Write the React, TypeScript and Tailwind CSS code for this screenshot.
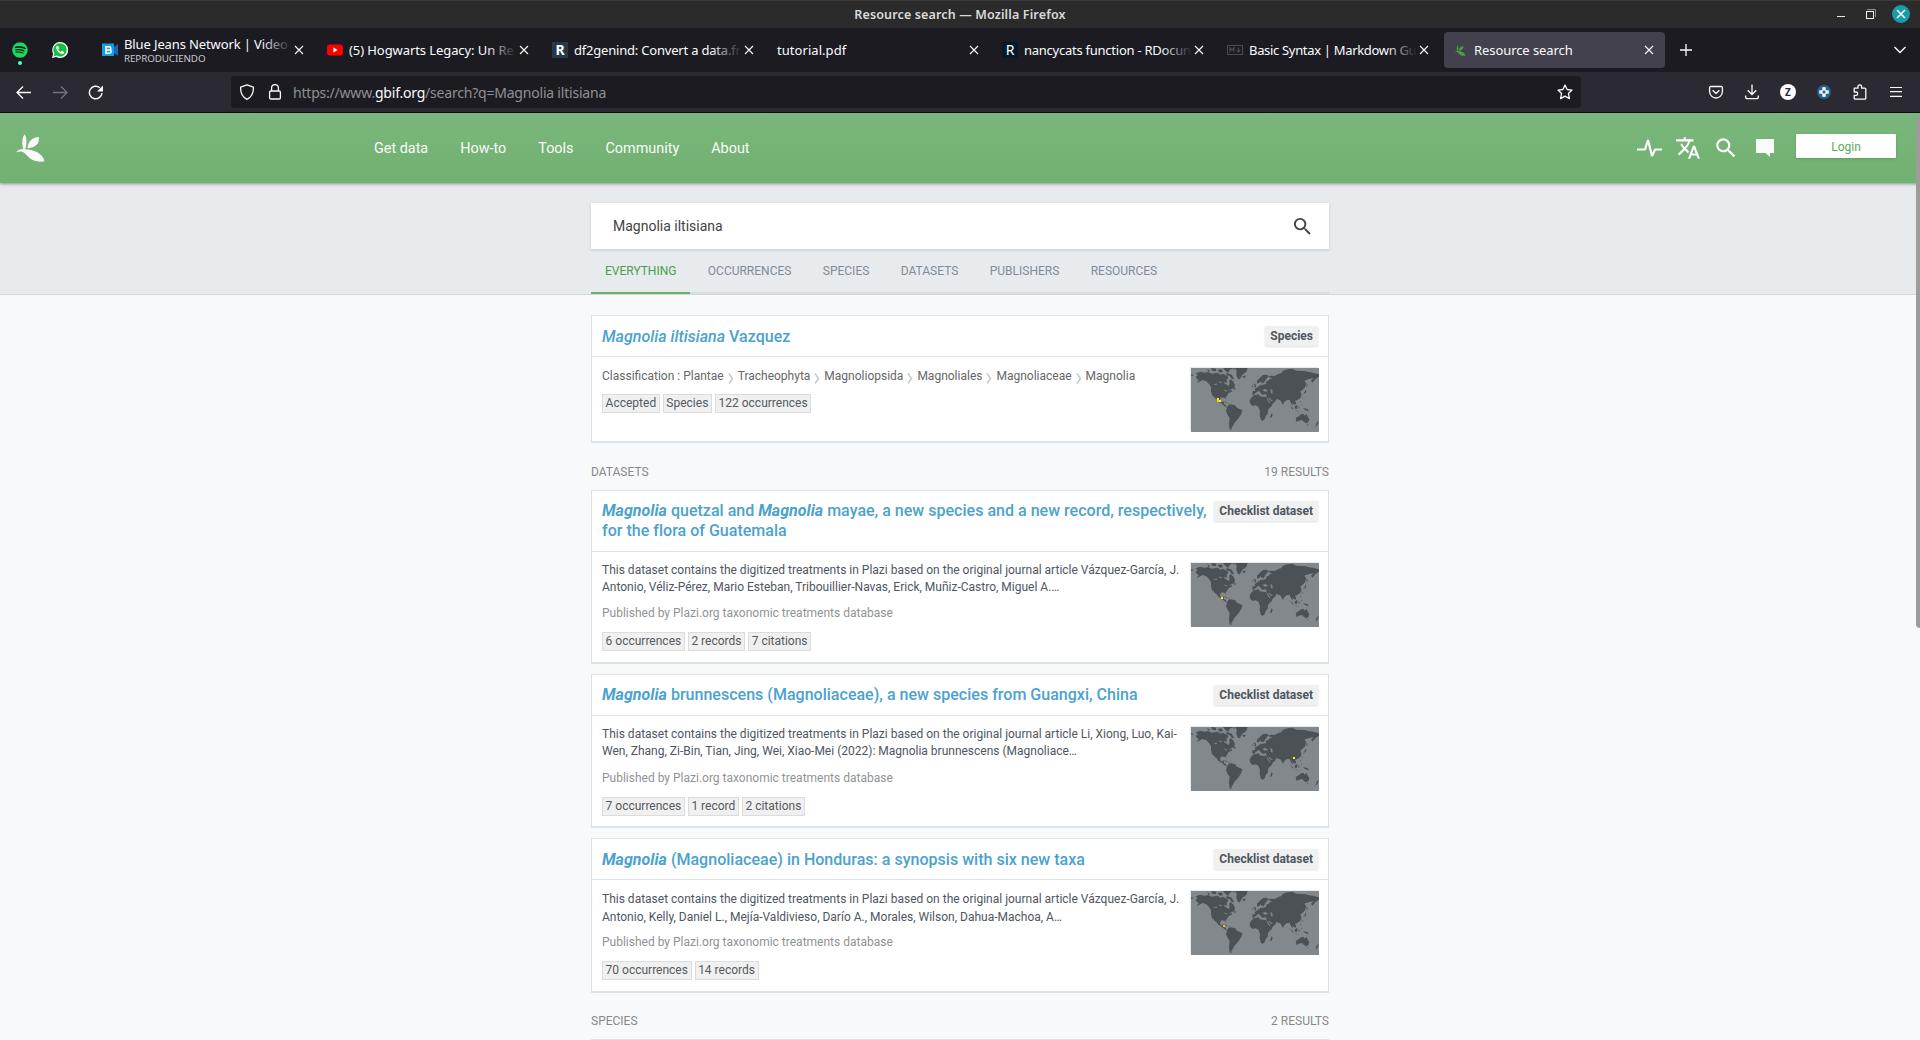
import React from "react";
import { MdTranslate, MdSearch } from "react-icons/md";
import { FaSpotify, FaPhoneAlt } from "react-icons/fa";

const UI = "font-['Noto_Sans',sans-serif]";

function Bird({ className }: { className: string }) {
  return (
    <svg viewBox="0 0 86 84" className={className} fill="currentColor">
      <path d="M25 1C31 9 33 24 28 44L21 44C16 27 18 12 25 1Z" />
      <path d="M68 9C70 28 62 39 34 43C36 22 47 10 68 9Z" />
      <path d="M0 55C6 46 16 43 27 46C48 47 80 56 85 82C58 86 42 76 31 63C22 51 10 50 0 55Z" />
    </svg>
  );
}

function Cross() {
  return (
    <svg viewBox="0 0 10 10" className="size-[10px] shrink-0" fill="none" stroke="#fbfbfe" strokeWidth="1.1">
      <path d="M1 1L9 9M9 1L1 9" />
    </svg>
  );
}

type TabProps = { icon?: React.ReactNode; title: string; sub?: string; tracking: string; active?: boolean };

function Tab({ icon, title, sub, tracking, active }: TabProps) {
  return (
    <div className="flex h-full w-[225px] shrink-0 items-center px-[2px] py-1">
      <div className={"flex h-full w-[221px] items-center rounded pl-2 pr-[11px] " + (active ? "bg-[#42414d]" : "")}>
        {icon && <div className="mr-[6px] flex size-4 shrink-0 items-center justify-center">{icon}</div>}
        <div className="relative min-w-0 flex-1 whitespace-nowrap text-[#fbfbfe]">
          <div className={"text-[13px] leading-[17px] " + tracking}>{title}</div>
          {sub && <div className="text-[9.8px] leading-[12px] tracking-[-0.1px] text-[#c9c9ce]">{sub}</div>}
          {!active && icon && <div className="absolute inset-y-0 -right-[6px] w-9 bg-gradient-to-r from-transparent to-[#1c1b22] to-85%" />}
        </div>
        <div className="relative ml-[3px] flex shrink-0">
          <Cross />
        </div>
      </div>
    </div>
  );
}

function RIcon({ className }: { className: string }) {
  return <span className={"flex size-4 items-center justify-center text-[14px] leading-none text-white " + className}>R</span>;
}

function Chrome() {
  return (
    <div className={UI}>
      <div className="flex h-7 items-center border-t border-[#3b3b3b] bg-[#2b2b2b]">
        <div className="w-[200px]" />
        <div className="flex-1 pt-px text-center text-[12.5px] font-semibold leading-none tracking-[0.14px] text-[#dadada]">
          Resource search — Mozilla Firefox
        </div>
        <div className="-mt-px flex w-[200px] items-center justify-end pr-[10px]">
          <svg viewBox="0 0 74 18" className="h-[18px] w-[74px]" fill="none">
            <path d="M1 11.5H9" stroke="#e6e6e6" />
            <path d="M31 4.5H39.5V12" stroke="#8f8f8f" />
            <rect x="30.5" y="6.5" width="7" height="7" stroke="#f0f0f0" />
            <circle cx="65" cy="9" r="9" fill="#1a9ba8" />
            <path d="M61 5L69 13M69 5L61 13" stroke="#fff" strokeWidth="1.5" />
          </svg>
        </div>
      </div>

      <div className="flex h-11 items-center bg-[#1c1b22]">
        <div className="flex w-[92px] shrink-0 items-center pl-3">
          <div className="relative size-4 rounded-full bg-[#10131a]">
            <FaSpotify className="size-4 text-[#1ed760]" />
            <span className="absolute left-[6px] top-[19px] size-1 rounded-full bg-[#54ffbd]" />
          </div>
          <div className="relative ml-6 flex size-4 items-center justify-center">
            <svg viewBox="0 0 16 16" className="absolute inset-0 size-4">
              <path d="M0 16L1.2 11.8A8 8 0 1 1 4.2 14.9Z" fill="#fff" />
              <path d="M1.6 14.4L2.4 11.5A6.7 6.7 0 1 1 4.6 13.6Z" fill="#12c143" />
            </svg>
            <FaPhoneAlt className="relative size-[8px] text-white" />
          </div>
        </div>
        <Tab
          title="Blue Jeans Network | Video"
          sub="REPRODUCIENDO"
          tracking="tracking-[-0.12px]"
          icon={
            <svg viewBox="0 0 16 16" className="size-4">
              <rect y="1.5" width="12" height="12.5" fill="#1a9be0" />
              <path d="M12 5L16 2V14L12 11Z" fill="#1667c0" />
              <path d="M4 4.8H7.2A1.6 1.6 0 0 1 7.2 8H4ZM4 8H7.6A1.6 1.6 0 0 1 7.6 11.2H4Z" fill="none" stroke="#fff" strokeWidth="1.5" />
            </svg>
          }
        />
        <Tab
          title="(5) Hogwarts Legacy: Un Re"
          tracking="tracking-[-0.08px]"
          icon={
            <svg viewBox="0 0 16 16" className="size-4">
              <rect y="2.5" width="16" height="11" rx="3" fill="#f00" />
              <path d="M6.4 5.6L10.6 8L6.4 10.4Z" fill="#fff" />
            </svg>
          }
        />
        <Tab title="df2genind: Convert a data.fr" tracking="tracking-[-0.2px]" icon={<RIcon className="bg-[#273849] font-bold" />} />
        <Tab title="tutorial.pdf" tracking="tracking-[0.05px]" />
        <Tab title="nancycats function - RDocun" tracking="tracking-[-0.25px]" icon={<RIcon className="rounded-[1px] bg-[#05192d]" />} />
        <Tab
          title="Basic Syntax | Markdown Gu"
          tracking="tracking-[-0.32px]"
          icon={
            <svg viewBox="0 0 16 16" className="size-4" fill="none" stroke="#4a4a50">
              <rect x="0.5" y="3.5" width="15" height="9" />
              <path d="M3 10.5V5.8L5 8.2L7 5.8V10.5M11.5 5.5V10M9.7 8.2L11.5 10.2L13.3 8.2" strokeWidth="1.2" />
            </svg>
          }
        />
        <Tab title="Resource search" active tracking="tracking-[-0.08px]" icon={<Bird className="h-[11px] w-3 text-[#4c9e45]" />} />
        <svg viewBox="0 0 12 12" className="ml-[13px] size-3" stroke="#fbfbfe" strokeWidth="1.3">
          <path d="M6 0V12M0 6H12" />
        </svg>
        <svg viewBox="0 0 12 8" className="ml-auto mr-[14px] h-2 w-3" fill="none" stroke="#fbfbfe" strokeWidth="1.4">
          <path d="M0.5 1L6 6.5L11.5 1" />
        </svg>
      </div>

      <div className="flex h-[41px] items-center border-b border-[#0c0c0d] bg-[#2b2a33]">
        <div className="flex w-[231px] shrink-0 items-center gap-5 pl-4">
          <svg viewBox="0 0 16 16" className="size-4" fill="none" stroke="#fbfbfe" strokeWidth="1.3">
            <path d="M1 8.5H15M7 2.5L1 8.5L7 14.5" />
          </svg>
          <svg viewBox="0 0 16 16" className="size-4" fill="none" stroke="#74737b" strokeWidth="1.3">
            <path d="M1 8.5H15M9 2.5L15 8.5L9 14.5" />
          </svg>
          <svg viewBox="0 0 16 16" className="size-4" fill="none" stroke="#fbfbfe" strokeWidth="1.4">
            <path d="M14 9A6.3 6.3 0 1 1 11.8 3.7" />
            <path d="M15 1.5V7.5H9Z" fill="#fbfbfe" stroke="none" />
          </svg>
        </div>
        <div className="flex h-8 w-[1350px] shrink-0 items-center rounded bg-[#1c1b22] pl-2">
          <svg viewBox="0 0 16 16" className="size-4" fill="none" stroke="#fbfbfe" strokeWidth="1.3" strokeLinejoin="round">
            <path d="M8 0.8L14.4 3.2C14.6 8.5 12.6 13 8 15.3C3.4 13 1.4 8.5 1.6 3.2Z" />
          </svg>
          <svg viewBox="0 0 16 16" className="ml-3 size-4" fill="none" stroke="#fbfbfe" strokeWidth="1.3">
            <rect x="2.6" y="7" width="10.8" height="8" rx="1.2" />
            <path d="M4.6 7V4A3.4 3.4 0 0 1 11.4 4V7" />
          </svg>
          <div className="ml-[10px] whitespace-nowrap pt-px text-[14px] leading-none tracking-[-0.21px] text-[#8f8f94]">
            https://www.<span className="text-[#fbfbfe]">gbif.org</span>/search?q=Magnolia iltisiana
          </div>
          <svg viewBox="0 0 16 16" className="ml-auto mr-2 size-4" fill="none" stroke="#fbfbfe" strokeWidth="1.3" strokeLinejoin="round">
            <path d="M8 1L10.1 5.5L15 6.1L11.4 9.4L12.4 14.6L8 12.1L3.6 14.6L4.6 9.4L1 6.1L5.9 5.5Z" />
          </svg>
        </div>
        <div className="ml-auto flex items-center gap-5 pr-4">
          <svg viewBox="0 0 16 16" className="size-4" fill="none" stroke="#fbfbfe" strokeWidth="1.3" strokeLinejoin="round">
            <path d="M2.3 2.5H13.7A1 1 0 0 1 14.4 3.3V7.6A6.4 6.4 0 0 1 1.6 7.6V3.3A1 1 0 0 1 2.3 2.5ZM4.6 6.3L8 9.5L11.4 6.3" />
          </svg>
          <svg viewBox="0 0 16 16" className="size-4" fill="none" stroke="#fbfbfe" strokeWidth="1.3">
            <path d="M8 0.5V10.5M3.7 6.2L8 10.5L12.3 6.2M1.7 11.5V13.5A1.4 1.4 0 0 0 3.1 14.6H12.9A1.4 1.4 0 0 0 14.3 13.5V11.5" />
          </svg>
          <div className="flex size-4 items-center justify-center rounded-full bg-[#fbfbfe] text-[10px] font-bold leading-none text-[#2b2a33]">Z</div>
          <svg viewBox="0 0 16 16" className="size-4">
            <circle cx="8" cy="8" r="7" fill="#27618f" />
            <path d="M6.2 3.2H9.8V6.2H12.8V9.8H9.8V12.8H6.2V9.8H3.2V6.2H6.2Z" fill="#e8f3fa" />
            <rect x="6.7" y="6.7" width="2.6" height="2.6" fill="#27618f" />
          </svg>
          <svg viewBox="0 0 16 16" className="size-4" fill="none" stroke="#fbfbfe" strokeWidth="1.3" strokeLinejoin="round">
            <path d="M2.2 4.2H6V2.6A1.8 1.8 0 0 1 9.6 2.6V4.2H12.8A1 1 0 0 1 13.8 5.2V14.2A1 1 0 0 1 12.8 15.2H3.2A1 1 0 0 1 2.2 14.2V11.4H4A1.7 1.7 0 0 0 4 8H2.2Z" />
          </svg>
          <svg viewBox="0 0 16 16" className="size-4" fill="none" stroke="#fbfbfe" strokeWidth="1.2">
            <path d="M2 3.5H14M2 7.6H14M2 12.4H14" />
          </svg>
        </div>
      </div>
    </div>
  );
}

const LAND =
  "M14 16L28 11L40 14L52 12L62 17L80 14L88 20L96 17L104 22L112 26L108 36L98 40L100 46L108 50L113 55L116 46L114 38L120 34L128 42L132 52L130 60L120 64L112 68L124 66L122 71L112 76L108 84L104 88L106 95L102 90L92 88L88 92L87 99L92 104L97 99L99 104L98 108L104 110L106 116L112 117L108 119L100 114L92 107L82 101L76 92L72 90L76 98L70 88L63 81L60 70L60 58L54 48L46 40L34 36L24 42L16 44L24 37L18 34L14 26L20 22Z" +
  "M132 0L170 0L166 12L154 20L146 34L140 32L136 20L137 8Z" +
  "M60 0L76 2L74 10L64 8ZM80 6L92 4L96 12L86 14ZM96 0L126 0L116 6L112 14L104 10ZM106 14L122 20L130 34L122 32L116 24L106 22ZM124 2L130 0L130 6ZM48 4L58 8L52 11ZM96 36L106 34L108 44L98 42Z" +
  "M126 62L134 60L133 66ZM154 24L164 23L162 29L156 29Z" +
  "M98 100L106 102L110 106L102 103ZM112 106L118 107L114 109Z" +
  "M108 120L112 111L120 109L132 112L138 119L154 127L151 138L143 150L136 158L130 165L126 173L121 180L122 186L116 184L114 168L116 150L108 137L105 128Z" +
  "M176 98L180 90L188 82L204 79L206 85L216 86L226 87L229 96L236 106L246 105L242 114L232 124L230 137L224 144L222 152L214 159L209 154L206 140L207 128L202 116L194 112L184 114L177 106ZM242 136L245 140L241 150L237 148Z" +
  "M184 80L184 70L193 69L191 63L202 56L208 50L216 50L226 48L224 42L232 38L236 34L244 32L232 27L238 23L250 24L262 18L270 16L276 8L290 4L304 2L316 8L340 9L352 12L366 14L384 19L384 26L374 32L364 44L360 38L368 30L352 34L340 38L346 46L342 58L334 66L328 70L332 80L328 90L318 97L312 98L316 106L312 111L304 104L306 114L300 106L296 96L288 96L280 102L276 111L268 97L256 93L252 102L240 108L234 98L226 86L226 79L214 80L209 75L204 68L198 72L188 80Z" +
  "M198 46L198 38L206 30L216 21L226 20L234 24L228 30L222 38L218 46L212 46L208 40L204 46ZM188 50L192 46L196 56L188 60L192 54ZM182 54L187 52L186 57Z" +
  "M346 50L350 48L348 60ZM342 70L344 64L346 72L336 80ZM333 90L335 88L335 94Z" +
  "M296 112L308 124L304 124ZM310 116L320 110L318 122L312 122ZM322 116L326 118L323 124ZM328 96L331 104L328 102ZM330 110L334 112L332 113ZM336 120L350 124L354 130L342 126ZM308 127L326 130L318 130Z" +
  "M314 150L324 144L330 139L338 138L342 144L346 137L352 149L355 154L352 163L345 166L338 161L334 156L324 158L316 161ZM348 169L352 169L350 173ZM378 162L383 160L380 170L372 177L376 168Z" +
  "M0 18L8 22L2 25ZM150 0L140 6";

function MapImage({ spots }: { spots: [number, number, string][] }) {
  return (
    <div className="h-16 w-32 shrink-0 bg-[#83888c] shadow-[-1px_-1px_0_#e7e9ea]">
      <svg viewBox="0 0 384 192" className="block h-16 w-32">
        <path d={LAND} fill="#4b5155" />
        <path d="M214 66L222 63L232 68L222 71ZM238 62L244 66L245 77L240 75ZM208 56L216 46L214 42L211 50ZM232 88L242 96L246 96L242 99L236 96Z" fill="#83888c" />
        <path d="M70 50L78 48M84 42L92 44M100 66L108 70" stroke="#83888c" strokeWidth="3" />
        {spots.map(([x, y, c], i) => (
          <rect key={i} x={x} y={y} width="6" height="6" fill={c} />
        ))}
      </svg>
    </div>
  );
}

function Chips({ items }: { items: string[] }) {
  return (
    <div className="flex gap-[3px]">
      {items.map((t) => (
        <span key={t} className="h-[19px] whitespace-nowrap border border-[#dcdcdc] bg-[#f0f0f0] px-[2.6px] text-[12px] leading-[17px] text-[#555a5f]">
          {t}
        </span>
      ))}
    </div>
  );
}

type CardProps = {
  height: string;
  titleGap?: string;
  title: React.ReactNode;
  badge: string;
  spots: [number, number, string][];
  children: React.ReactNode;
};

function Card({ height, titleGap = "mb-px", title, badge, spots, children }: CardProps) {
  return (
    <article className={"flex flex-col border border-b-2 border-[#dbe3e7] bg-white " + height}>
      <div className="flex items-start justify-between border-b border-[#dbe3e7] px-[10px] pb-[9px] pt-[10px]">
        <h3 className={"whitespace-nowrap text-[16px] font-medium leading-5 tracking-[0.02px] text-[#4ba2ce] " + titleGap}>{title}</h3>
        <span className="h-5 shrink-0 whitespace-nowrap bg-[#f0f0f0] px-[5px] text-[12px] font-bold leading-5 text-[#4e565f] shadow-[0_1px_2px_rgba(0,0,0,0.12)]">
          {badge}
        </span>
      </div>
      <div className="flex justify-between pl-[10px] pr-[9px] pt-[11px]">
        <div className="whitespace-nowrap">{children}</div>
        <MapImage spots={spots} />
      </div>
    </article>
  );
}

type DatasetProps = { lines: string[]; chips: string[]; leading: string; gap: string };

function Dataset({ lines, chips, leading, gap }: DatasetProps) {
  return (
    <div className="-mt-px">
      {lines.map((l) => (
        <p key={l} className={"text-[12px] text-[#4e565f] " + leading}>
          {l}
        </p>
      ))}
      <p className={"mb-[10px] text-[12px] leading-[17px] text-[#8f9396] " + gap}>Published by Plazi.org taxonomic treatments database</p>
      <Chips items={chips} />
    </div>
  );
}

function SectionHead({ name, count, height }: { name: string; count: string; height: string }) {
  return (
    <div className={"flex items-center justify-between pt-[10px] text-[12px] leading-none text-[#888] " + height}>
      <span>{name}</span>
      <span>{count}</span>
    </div>
  );
}

export default function App() {
  const classification = ["Plantae", "Tracheophyta", "Magnoliopsida", "Magnoliales", "Magnoliaceae", "Magnolia"];
  const tabs = ["OCCURRENCES", "SPECIES", "DATASETS", "PUBLISHERS", "RESOURCES"];
  return (
    <div className="relative h-[1040px] w-[1920px] overflow-hidden bg-[#f8f9fb] font-[Roboto,sans-serif]">
      <Chrome />

      <header className="relative flex h-[70px] items-center bg-gradient-to-b from-[#7ab67b] to-[#71b171] text-white shadow-[0_1px_3px_rgba(0,0,0,0.4)]">
        <Bird className="ml-4 h-7 w-[29px] text-[#fafafa]" />
        <nav className="ml-[329px] flex gap-8 pt-[2px] text-[14.4px] text-[#fafafa]">
          <span>Get data</span>
          <span>How-to</span>
          <span>Tools</span>
          <span>Community</span>
          <span>About</span>
        </nav>
        <div className="ml-auto flex items-center pr-6">
          <svg viewBox="0 0 25 20" className="h-5 w-[25px]" fill="none" stroke="#fafafa" strokeWidth="2.2">
            <path d="M0 11.5H8L11 2L15 18L18 11.5H25" strokeLinejoin="bevel" />
          </svg>
          <MdTranslate className="ml-[13px] size-[26px]" />
          <MdSearch className="ml-[12px] size-[26px]" />
          <svg viewBox="0 0 18 18" className="ml-[17px] h-[18px] w-[18px]" fill="#fafafa">
            <path d="M0 0H18V14H14V18L9.5 14H0Z" />
          </svg>
          <div className="mb-1 ml-[22px] flex h-6 w-[100px] items-center justify-center rounded-[1px] bg-white pt-px text-[12px] text-[#61a861] shadow-[0_1px_3px_rgba(0,0,0,0.14)]">
            Login
          </div>
        </div>
      </header>

      <section className="h-28 border-b border-[#d3d7d9] bg-[#e7ebee] pt-5">
        <div className="mx-auto w-[738px]">
          <div className="flex h-[46px] items-center justify-between bg-white pl-[22px] pr-[15px] shadow-[0_1px_3px_rgba(0,0,0,0.14)]">
            <span className="text-[14px] text-[#434343]">Magnolia iltisiana</span>
            <MdSearch className="size-[23px] text-[#434343]" />
          </div>
          <div className="flex h-[45px] border-b-2 border-[#dadcdd] text-[12px] text-[#7f8b99]">
            <span className="-mb-[2px] border-b-2 border-[#6cb06c] px-[14px] leading-[45px] text-[#4c9e4c]">EVERYTHING</span>
            {tabs.map((t) => (
              <span key={t} className="pl-[17.4px] pr-[14px] leading-[45px]">
                {t}
              </span>
            ))}
          </div>
        </div>
      </section>

      <main className="mx-auto w-[738px] pt-5">
        <Card
          height="h-[128px]"
          titleGap="mt-px"
          title={
            <>
              <i>Magnolia iltisiana</i> Vazquez
            </>
          }
          badge="Species"
          spots={[[78, 90, "#fff100"], [84, 96, "#fff100"], [78, 96, "#f2d400"]]}
        >
          <p className="mb-[9px] flex text-[12px] leading-[17px] text-[#666]">
            <span className="mr-[3px]">Classification :</span>
            {classification.map((c, i) => (
              <React.Fragment key={c}>
                {i > 0 && (
                  <svg viewBox="0 0 6 11" className="ml-1 mr-1 mt-[5px] h-[11px] w-[6px]" fill="none" stroke="#c6c9cb" strokeWidth="1.5">
                    <path d="M1 0.5L4.5 5.5L1 10.5" />
                  </svg>
                )}
                <span>{c}</span>
              </React.Fragment>
            ))}
          </p>
          <Chips items={["Accepted", "Species", "122 occurrences"]} />
        </Card>

        <SectionHead name="DATASETS" count="19 RESULTS" height="h-[47px]" />

        <div className="flex flex-col gap-[10px]">
          <Card
            height="h-[174px]"
            title={
              <>
                <i className="font-bold">Magnolia</i> quetzal and <i className="font-bold">Magnolia</i> mayae, a new species and a new record, respectively,
                <br />
                for the flora of Guatemala
              </>
            }
            badge="Checklist dataset"
            spots={[[90, 102, "#fff100"]]}
          >
            <Dataset
              leading="leading-[17px]"
              gap="mt-[9px]"
              lines={[
                "This dataset contains the digitized treatments in Plazi based on the original journal article Vázquez-García, J.",
                "Antonio, Véliz-Pérez, Mario Esteban, Tribouillier-Navas, Erick, Muñiz-Castro, Miguel A.…",
              ]}
              chips={["6 occurrences", "2 records", "7 citations"]}
            />
          </Card>
          <Card
            height="h-[154px]"
            title={
              <>
                <i className="font-bold">Magnolia</i> brunnescens (Magnoliaceae), a new species from Guangxi, China
              </>
            }
            badge="Checklist dataset"
            spots={[[306, 90, "#fff100"]]}
          >
            <Dataset
              leading="leading-[17px]"
              gap="mt-[10px]"
              lines={[
                "This dataset contains the digitized treatments in Plazi based on the original journal article Li, Xiong, Luo, Kai-",
                "Wen, Zhang, Zi-Bin, Tian, Jing, Wei, Xiao-Mei (2022): Magnolia brunnescens (Magnoliace…",
              ]}
              chips={["7 occurrences", "1 record", "2 citations"]}
            />
          </Card>
          <Card
            height="h-[155px]"
            titleGap="mt-px"
            title={
              <>
                <i className="font-bold">Magnolia</i> (Magnoliaceae) in Honduras: a synopsis with six new taxa
              </>
            }
            badge="Checklist dataset"
            spots={[[96, 102, "#f5bd10"]]}
          >
            <Dataset
              leading="leading-[18px]"
              gap="mt-[8px]"
              lines={[
                "This dataset contains the digitized treatments in Plazi based on the original journal article Vázquez-García, J.",
                "Antonio, Kelly, Daniel L., Mejía-Valdivieso, Darío A., Morales, Wilson, Dahua-Machoa, A…",
              ]}
              chips={["70 occurrences", "14 records"]}
            />
          </Card>
        </div>

        <SectionHead name="SPECIES" count="2 RESULTS" height="h-[46px]" />
        <div className="h-10 border border-[#dbe3e7] bg-white" />
      </main>

      <div className="absolute right-0 top-[116px] h-[512px] w-1 rounded-l-sm bg-[#9c9c9c]" />
    </div>
  );
}
